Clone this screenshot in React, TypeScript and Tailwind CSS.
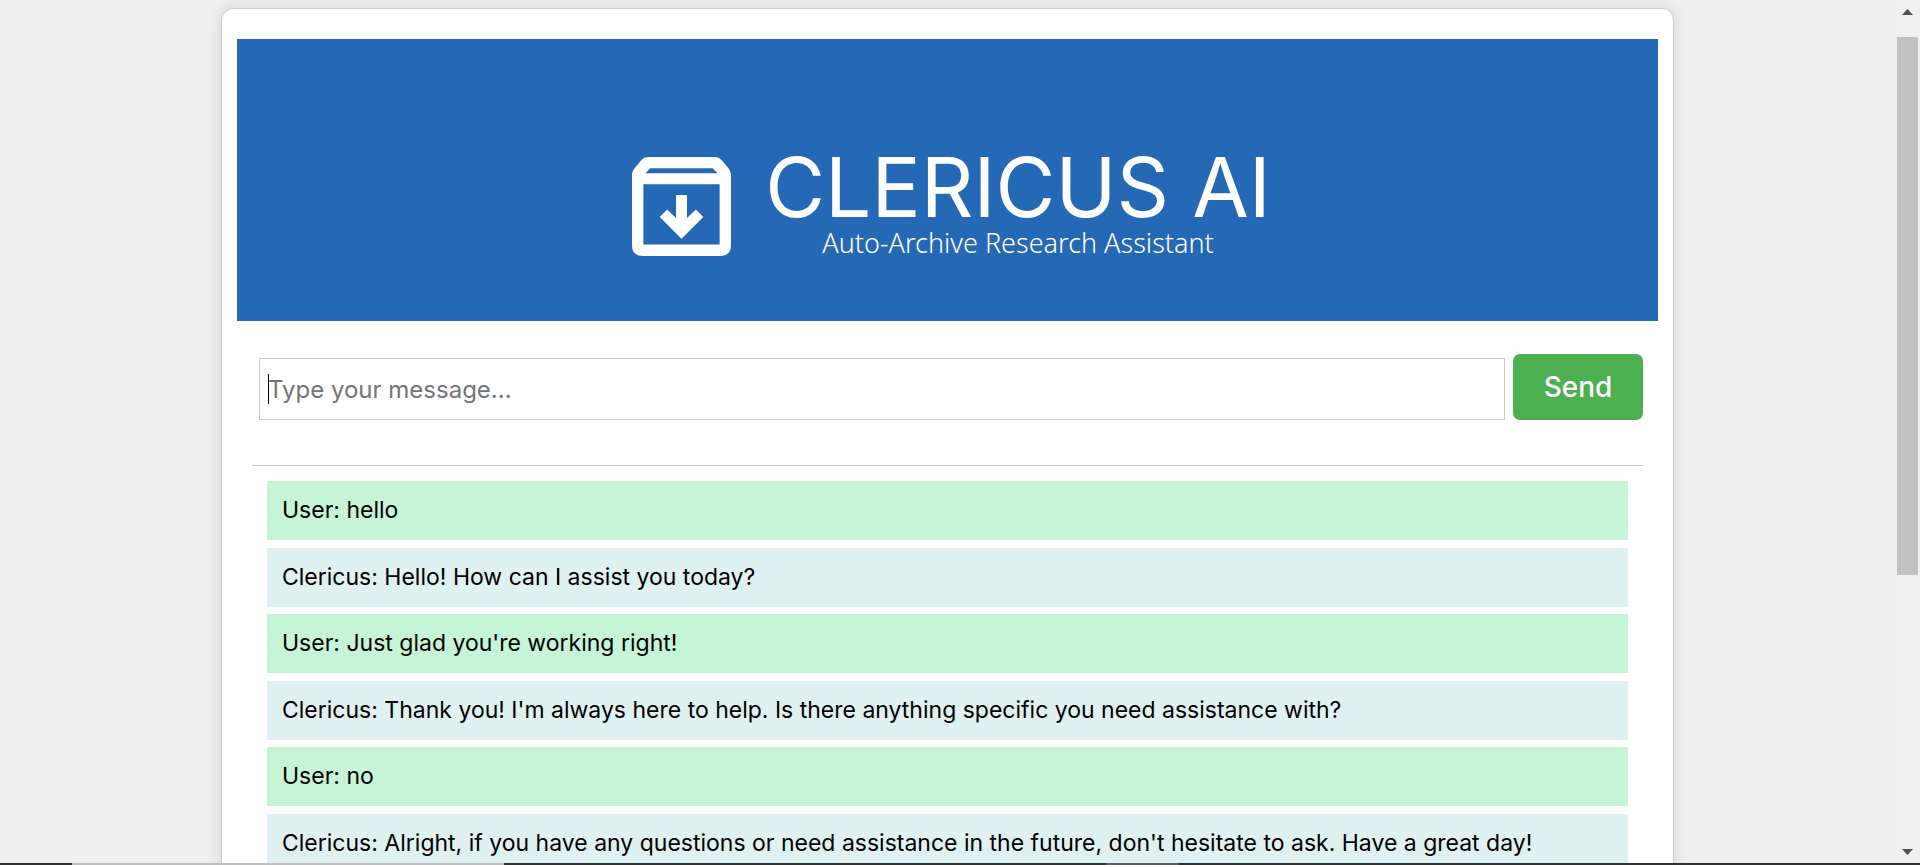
const messages = [
  { from: "User", text: "hello" },
  { from: "Clericus", text: "Hello! How can I assist you today?" },
  { from: "User", text: "Just glad you're working right!" },
  {
    from: "Clericus",
    text: "Thank you! I'm always here to help. Is there anything specific you need assistance with?",
  },
  { from: "User", text: "no" },
  {
    from: "Clericus",
    text: "Alright, if you have any questions or need assistance in the future, don't hesitate to ask. Have a great day!",
  },
];

function ArchiveIcon() {
  return (
    <svg viewBox="0 0 100 100" className="size-[99px] shrink-0" fill="#fff" fillRule="evenodd" aria-hidden="true">
      <path d="M16 0H84Q88 0 90.500 3L98 12Q100 15 100 18V89Q100 100 89 100H11Q0 100 0 89V18Q0 15 2 12L9.500 3Q12 0 16 0ZM18.500 11.300L13.500 16.500H86.500L81.500 11.300ZM11.500 27.500V88.500H88.500V27.500Z" />
      <path d="M44.500 38.500H55.500V61.500L64.500 53L72 60.500L50 82.500L28 60.500L35.500 53L44.500 61.500Z" />
    </svg>
  );
}

function Banner() {
  return (
    <header className="flex h-[282px] items-center justify-center gap-[34px] bg-[#2569b6] pt-[53px] pl-2 text-white">
      <ArchiveIcon />
      <div className="mb-2 flex flex-col items-center">
        <h1 className="text-[82px] leading-[80px] font-normal whitespace-nowrap">CLERICUS AI</h1>
        <p className="font-['Noto_Sans'] text-[27px] leading-[30px] font-light whitespace-nowrap">
          Auto-Archive Research Assistant
        </p>
      </div>
    </header>
  );
}

function MessageForm() {
  return (
    <form className="mt-[33px] flex items-end gap-2 pr-[15px] pl-[22px]" onSubmit={(e) => e.preventDefault()}>
      <div className="relative flex-1">
        <input
          type="text"
          aria-label="Message"
          placeholder="Type your message..."
          className="block h-[62px] w-full border border-[#ccc] bg-white px-2 text-[24px] text-black caret-transparent outline-none placeholder:text-[#757575]"
        />
        <span className="pointer-events-none absolute top-4 left-[9px] h-[30px] w-px bg-black" />
      </div>
      <button type="submit" className="h-[66px] w-[130px] rounded-[7px] bg-[#4caf50] text-[28px] font-medium text-white">
        Send
      </button>
    </form>
  );
}

function MessageList() {
  return (
    <ul className="mx-[15px] mt-[45px] border-t border-[#ccc] px-[15px] pt-[15px]">
      {messages.map((m, i) => (
        <li
          key={i}
          className={
            m.from === "User"
              ? "mb-2 bg-[#c5f5d6] px-[15px] py-[15px] text-[23px] leading-[29px] whitespace-nowrap"
              : "mb-[7px] bg-[#e0f1f1] px-[15px] py-[15px] text-[23px] leading-[29px] whitespace-nowrap"
          }
        >
          {m.from}: {m.text}
        </li>
      ))}
    </ul>
  );
}

function ScrollBar() {
  return (
    <div className="flex w-[25px] shrink-0 flex-col items-center bg-[#f0f0f0] pt-[9px] pb-2" aria-hidden="true">
      <svg viewBox="0 0 11 6" className="h-[6px] w-[11px]" fill="#505050">
        <path d="M0 6L5.500 0L11 6Z" />
      </svg>
      <div className="mt-[22px] h-[538px] w-[21px] bg-[#c1c1c1]" />
      <svg viewBox="0 0 11 6" className="mt-auto h-[6px] w-[11px]" fill="#505050">
        <path d="M0 0H11L5.500 6Z" />
      </svg>
    </div>
  );
}

export default function App() {
  return (
    <div className="flex h-screen flex-col bg-[#efefef] font-['Inter',sans-serif] text-black">
      <div className="flex min-h-0 flex-1">
        <div className="flex-1 overflow-hidden pt-2">
          <main className="mx-auto max-w-[1453px] rounded-xl border border-[#ccc] bg-white px-[15px] pt-[30px] pb-[30px] shadow-[0_0_15px_rgba(0,0,0,0.1)]">
            <Banner />
            <MessageForm />
            <MessageList />
          </main>
        </div>
        <ScrollBar />
      </div>
      <div className="flex h-[2px] shrink-0 bg-[#25333b]" aria-hidden="true">
        <div className="ml-[72px] w-[432px] bg-[#bfbfbf]" />
        <div className="ml-[602px] w-[73px] bg-[#56615f]" />
      </div>
    </div>
  );
}
